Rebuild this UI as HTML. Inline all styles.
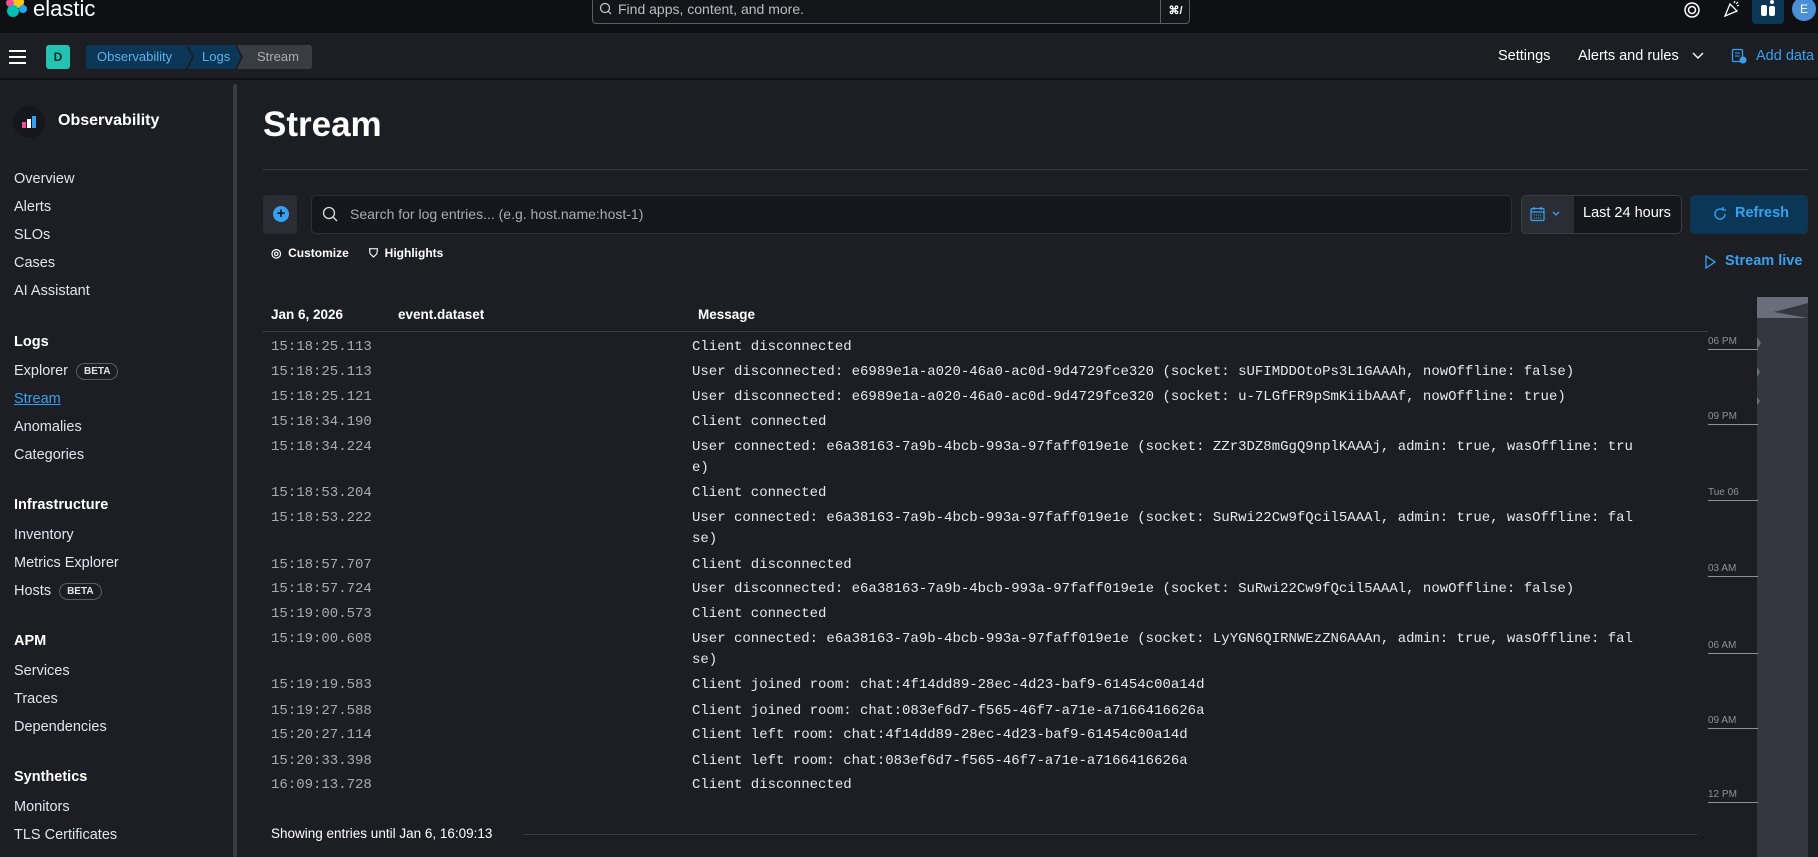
<!DOCTYPE html>
<html><head><meta charset="utf-8"><style>
*{box-sizing:border-box;margin:0;padding:0}
body{width:1818px;height:857px;overflow:hidden;background:#1d1e24;font-family:"Liberation Sans",sans-serif;color:#dfe5ef;position:relative}
.a{position:absolute;white-space:nowrap}
.top{left:0;top:0;width:1818px;height:33px;background:#0f1014}
.hdr{left:0;top:33px;width:1818px;height:47px;background:#1d1e24;border-bottom:2px solid #111216}
.side{left:0;top:81px;width:238px;height:776px;background:#1d1e24}
.nav{font-size:14.5px;color:#dfe5ef;left:14px}
.nh{font-size:14.5px;font-weight:bold;color:#fff;left:14px}
.mono{font-family:"Liberation Mono",monospace;font-size:14px;line-height:21px}
.ts{left:271px;color:#a8abb3}
.msg{left:692px;color:#e6e8ee}
.beta{display:inline-block;border:1px solid #5a5d66;border-radius:10px;font-size:10px;font-weight:bold;padding:2px 7px;margin-left:8px;vertical-align:1px}
.tl{font-size:10px;color:#8d919a;left:1708px}
.tline{left:1708px;width:50px;height:1px;background:#8d919a}
</style></head><body>
<div class="a top"></div>
<svg class="a" style="left:4px;top:-3px" width="24" height="24" viewBox="0 0 24 24"><circle cx="14" cy="5" r="6" fill="#fec514"/><circle cx="6" cy="6" r="4" fill="#f04e98"/><circle cx="9" cy="14" r="6" fill="#00bfb3"/><circle cx="19" cy="12" r="4" fill="#1ba9f5"/></svg>
<div class="a" style="left:33px;top:-4px;font-size:22px;color:#fff">elastic</div>
<div class="a" style="left:592px;top:-2px;width:598px;height:26px;border:1px solid #5a5d66;border-radius:4px;background:#141519"></div>
<svg class="a" style="left:599px;top:2px" width="14" height="14" viewBox="0 0 14 14"><circle cx="6" cy="6" r="4.5" fill="none" stroke="#ccc" stroke-width="1.2"/><path d="M9 9l3 3" stroke="#ccc" stroke-width="1.2"/></svg>
<div class="a" style="left:618px;top:1px;font-size:14px;color:#b8bcc4">Find apps, content, and more.</div>
<div class="a" style="left:1160px;top:-2px;width:30px;height:26px;border-left:1px solid #5a5d66;font-size:11px;color:#fff;text-align:center;padding-top:6px;font-weight:bold">⌘/</div>
<svg class="a" style="left:1683px;top:1px" width="18" height="18" viewBox="0 0 18 18"><circle cx="9" cy="9" r="7" fill="none" stroke="#fff" stroke-width="1.5"/><circle cx="9" cy="9" r="3.5" fill="none" stroke="#fff" stroke-width="1.5"/></svg>
<svg class="a" style="left:1723px;top:0" width="18" height="18" viewBox="0 0 18 18"><path d="M2 16l5-12 7 7z" fill="none" stroke="#fff" stroke-width="1.3"/><path d="M11 3l1-2M14 6l2-1M13 4l2-2" stroke="#fff" stroke-width="1.2"/></svg>
<div class="a" style="left:1752px;top:0;width:32px;height:24px;background:#0b3656;border-radius:0 0 4px 4px"></div>
<svg class="a" style="left:1760px;top:0" width="16" height="18" viewBox="0 0 16 18"><rect x="1" y="5" width="6" height="11" rx="2" fill="#fff"/><rect x="9" y="6" width="6" height="10" rx="2" fill="#fff"/><circle cx="12" cy="2" r="2" fill="#fff"/></svg>
<div class="a" style="left:1792px;top:-3px;width:24px;height:24px;border-radius:12px;background:#4b8fd6;color:#fff;font-size:12px;text-align:center;line-height:24px">E</div>

<div class="a hdr"></div>
<div class="a" style="left:9px;top:50px;width:17px;height:2px;background:#fff;box-shadow:0 6px 0 #fff,0 12px 0 #fff"></div>
<div class="a" style="left:46px;top:45px;width:24px;height:24px;border-radius:3px;background:#24c2b1;color:#0b2b28;font-size:12px;text-align:center;line-height:24px;font-weight:bold">D</div>
<svg class="a" style="left:86px;top:45px" width="226" height="24" viewBox="0 0 226 24"><path d="M3 0H100l6 12-6 12H3a3 3 0 0 1-3-3V3a3 3 0 0 1 3-3z" fill="#0b3656"/><path d="M102 0h47l6 12-6 12H102l6-12z" fill="#0b3656"/><path d="M151 0h72a3 3 0 0 1 3 3v18a3 3 0 0 1-3 3h-72l6-12z" fill="#3a3c44"/></svg>
<div class="a" style="left:97px;top:49px;font-size:13px;color:#5fb0ec">Observability</div>
<div class="a" style="left:202px;top:49px;font-size:13px;color:#5fb0ec">Logs</div>
<div class="a" style="left:257px;top:49px;font-size:13px;color:#a7acb5">Stream</div>
<div class="a" style="left:1498px;top:48px;font-size:14.5px;color:#fff">Settings</div>
<div class="a" style="left:1578px;top:48px;font-size:14.5px;color:#fff">Alerts and rules</div>
<svg class="a" style="left:1692px;top:51px" width="12" height="10" viewBox="0 0 12 10"><path d="M1 2l5 5 5-5" fill="none" stroke="#fff" stroke-width="1.4"/></svg>
<svg class="a" style="left:1731px;top:48px" width="16" height="16" viewBox="0 0 16 16"><rect x="1.5" y="1.5" width="10" height="12" rx="1" fill="none" stroke="#36a2ef" stroke-width="1.3"/><path d="M4 5h5M4 8h5" stroke="#36a2ef"/><circle cx="12" cy="12" r="3.5" fill="#36a2ef"/></svg>
<div class="a" style="left:1756px;top:48px;font-size:14.5px;color:#36a2ef">Add data</div>

<div class="a side"></div>
<div class="a" style="left:233px;top:84px;width:4px;height:773px;background:#3a3c44;border-radius:2px"></div>
<div class="a" style="left:13px;top:106px;width:32px;height:32px;border-radius:16px;background:#16171c"></div>
<svg class="a" style="left:20px;top:113px" width="18" height="18" viewBox="0 0 18 18"><rect x="2" y="9" width="4" height="6" fill="#f04e98"/><rect x="7" y="6" width="4" height="9" fill="#fff"/><rect x="12" y="3" width="4" height="12" fill="#36a2ef"/></svg>
<div class="a" style="left:58px;top:112px;font-size:16px;font-weight:bold;color:#fff">Observability</div>
<div class="a nav" style="top:171px">Overview</div>
<div class="a nav" style="top:199px">Alerts</div>
<div class="a nav" style="top:227px">SLOs</div>
<div class="a nav" style="top:255px">Cases</div>
<div class="a nav" style="top:283px">AI Assistant</div>
<div class="a nh" style="top:334px">Logs</div>
<div class="a nav" style="top:363px">Explorer<span class="beta">BETA</span></div>
<div class="a nav" style="top:391px;color:#36a2ef;text-decoration:underline">Stream</div>
<div class="a nav" style="top:419px">Anomalies</div>
<div class="a nav" style="top:447px">Categories</div>
<div class="a nh" style="top:497px">Infrastructure</div>
<div class="a nav" style="top:527px">Inventory</div>
<div class="a nav" style="top:555px">Metrics Explorer</div>
<div class="a nav" style="top:583px">Hosts<span class="beta">BETA</span></div>
<div class="a nh" style="top:633px">APM</div>
<div class="a nav" style="top:663px">Services</div>
<div class="a nav" style="top:691px">Traces</div>
<div class="a nav" style="top:719px">Dependencies</div>
<div class="a nh" style="top:769px">Synthetics</div>
<div class="a nav" style="top:799px">Monitors</div>
<div class="a nav" style="top:827px">TLS Certificates</div>

<div class="a" style="left:263px;top:105px;font-size:35px;font-weight:bold;color:#fff">Stream</div>
<div class="a" style="left:263px;top:169px;width:1545px;height:1px;background:#3a3c44"></div>
<div class="a" style="left:263px;top:195px;width:34px;height:39px;border-radius:4px;background:#2b2d35"></div>
<div class="a" style="left:273px;top:206px;width:16px;height:16px;border-radius:8px;background:#36a2ef;color:#0b1628;font-size:15px;line-height:15px;text-align:center;font-weight:bold">+</div>
<div class="a" style="left:311px;top:195px;width:1201px;height:39px;border:1px solid #2e3037;border-radius:5px;background:#16171c"></div>
<svg class="a" style="left:322px;top:206px" width="16" height="16" viewBox="0 0 16 16"><circle cx="7" cy="7" r="5.5" fill="none" stroke="#ddd" stroke-width="1.3"/><path d="M11 11l4 4" stroke="#ddd" stroke-width="1.3"/></svg>
<div class="a" style="left:350px;top:206px;font-size:14px;color:#a7acb5">Search for log entries... (e.g. host.name:host-1)</div>
<div class="a" style="left:1521px;top:195px;width:161px;height:39px;border:1px solid #3a3c44;border-radius:5px;background:#16171c"></div>
<div class="a" style="left:1522px;top:196px;width:52px;height:37px;background:#2b2d35;border-radius:4px 0 0 4px"></div>
<svg class="a" style="left:1530px;top:206px" width="32" height="16" viewBox="0 0 32 16"><rect x="1" y="2.5" width="13" height="12" rx="1" fill="none" stroke="#36a2ef" stroke-width="1.2"/><path d="M1 6h13M4 1v3M11 1v3" stroke="#36a2ef" stroke-width="1.2"/><path d="M4 9h7M4 12h7" stroke="#36a2ef" stroke-dasharray="1 1"/><path d="M23 6l3 3 3-3" fill="none" stroke="#36a2ef" stroke-width="1.3"/></svg>
<div class="a" style="left:1583px;top:205px;font-size:14.5px;color:#fff">Last 24 hours</div>
<div class="a" style="left:1690px;top:195px;width:118px;height:39px;border-radius:5px;background:#0b3656"></div>
<svg class="a" style="left:1712px;top:206px" width="16" height="16" viewBox="0 0 16 16"><path d="M13 8a5 5 0 1 1-2-4" fill="none" stroke="#36a2ef" stroke-width="1.4"/><path d="M11 1v3h3" fill="none" stroke="#36a2ef" stroke-width="1.3"/></svg>
<div class="a" style="left:1735px;top:205px;font-size:14.5px;font-weight:bold;color:#36a2ef">Refresh</div>
<div class="a" style="left:271px;top:246px;font-size:12px;font-weight:bold;color:#fff">◎&nbsp; Customize</div>
<div class="a" style="left:369px;top:246px;font-size:12px;font-weight:bold;color:#fff">⛉&nbsp; Highlights</div>
<svg class="a" style="left:1704px;top:255px" width="12" height="14" viewBox="0 0 12 14"><path d="M2 1l9 6-9 6z" fill="none" stroke="#36a2ef" stroke-width="1.3"/></svg>
<div class="a" style="left:1725px;top:253px;font-size:14.5px;font-weight:bold;color:#36a2ef">Stream live</div>

<div class="a" style="left:271px;top:307px;font-size:13.5px;font-weight:bold;color:#fff">Jan 6, 2026</div>
<div class="a" style="left:398px;top:307px;font-size:13.5px;font-weight:bold;color:#fff">event.dataset</div>
<div class="a" style="left:698px;top:307px;font-size:13.5px;font-weight:bold;color:#fff">Message</div>
<div class="a" style="left:263px;top:331px;width:1445px;height:1px;background:#3a3c44"></div>

<div class="a mono ts" style="top:337px">15:18:25.113</div><div class="a mono msg" style="top:337px">Client disconnected</div>
<div class="a mono ts" style="top:362px">15:18:25.113</div><div class="a mono msg" style="top:362px">User disconnected: e6989e1a-a020-46a0-ac0d-9d4729fce320 (socket: sUFIMDDOtoPs3L1GAAAh, nowOffline: false)</div>
<div class="a mono ts" style="top:387px">15:18:25.121</div><div class="a mono msg" style="top:387px">User disconnected: e6989e1a-a020-46a0-ac0d-9d4729fce320 (socket: u-7LGfFR9pSmKiibAAAf, nowOffline: true)</div>
<div class="a mono ts" style="top:412px">15:18:34.190</div><div class="a mono msg" style="top:412px">Client connected</div>
<div class="a mono ts" style="top:437px">15:18:34.224</div><div class="a mono msg" style="top:437px">User connected: e6a38163-7a9b-4bcb-993a-97faff019e1e (socket: ZZr3DZ8mGgQ9nplKAAAj, admin: true, wasOffline: tru<br>e)</div>
<div class="a mono ts" style="top:483px">15:18:53.204</div><div class="a mono msg" style="top:483px">Client connected</div>
<div class="a mono ts" style="top:508px">15:18:53.222</div><div class="a mono msg" style="top:508px">User connected: e6a38163-7a9b-4bcb-993a-97faff019e1e (socket: SuRwi22Cw9fQcil5AAAl, admin: true, wasOffline: fal<br>se)</div>
<div class="a mono ts" style="top:555px">15:18:57.707</div><div class="a mono msg" style="top:555px">Client disconnected</div>
<div class="a mono ts" style="top:579px">15:18:57.724</div><div class="a mono msg" style="top:579px">User disconnected: e6a38163-7a9b-4bcb-993a-97faff019e1e (socket: SuRwi22Cw9fQcil5AAAl, nowOffline: false)</div>
<div class="a mono ts" style="top:604px">15:19:00.573</div><div class="a mono msg" style="top:604px">Client connected</div>
<div class="a mono ts" style="top:629px">15:19:00.608</div><div class="a mono msg" style="top:629px">User connected: e6a38163-7a9b-4bcb-993a-97faff019e1e (socket: LyYGN6QIRNWEzZN6AAAn, admin: true, wasOffline: fal<br>se)</div>
<div class="a mono ts" style="top:675px">15:19:19.583</div><div class="a mono msg" style="top:675px">Client joined room: chat:4f14dd89-28ec-4d23-baf9-61454c00a14d</div>
<div class="a mono ts" style="top:701px">15:19:27.588</div><div class="a mono msg" style="top:701px">Client joined room: chat:083ef6d7-f565-46f7-a71e-a7166416626a</div>
<div class="a mono ts" style="top:725px">15:20:27.114</div><div class="a mono msg" style="top:725px">Client left room: chat:4f14dd89-28ec-4d23-baf9-61454c00a14d</div>
<div class="a mono ts" style="top:751px">15:20:33.398</div><div class="a mono msg" style="top:751px">Client left room: chat:083ef6d7-f565-46f7-a71e-a7166416626a</div>
<div class="a mono ts" style="top:775px">16:09:13.728</div><div class="a mono msg" style="top:775px">Client disconnected</div>
<div class="a" style="left:271px;top:826px;font-size:13.5px;color:#fff">Showing entries until Jan 6, 16:09:13</div>
<div class="a" style="left:523px;top:834px;width:1174px;height:1px;background:#3a3c44"></div>

<div class="a" style="left:1757px;top:297px;width:51px;height:560px;background:#343640"></div>
<svg class="a" style="left:1757px;top:297px" width="51" height="110" viewBox="0 0 51 110"><path d="M0 0h51v6L17 15l34 6v0H0z" fill="#6a6e78"/><path d="M0 40l4 6-4 6zM0 70l3 5-3 5zM0 100l3 4-3 4z" fill="#6a6e78"/></svg>
<div class="a tl" style="top:336px">06 PM</div><div class="a tline" style="top:349px"></div>
<div class="a tl" style="top:411px">09 PM</div><div class="a tline" style="top:424px"></div>
<div class="a tl" style="top:487px">Tue 06</div><div class="a tline" style="top:500px"></div>
<div class="a tl" style="top:563px">03 AM</div><div class="a tline" style="top:576px"></div>
<div class="a tl" style="top:640px">06 AM</div><div class="a tline" style="top:653px"></div>
<div class="a tl" style="top:715px">09 AM</div><div class="a tline" style="top:728px"></div>
<div class="a tl" style="top:789px">12 PM</div><div class="a tline" style="top:802px"></div>
</body></html>
